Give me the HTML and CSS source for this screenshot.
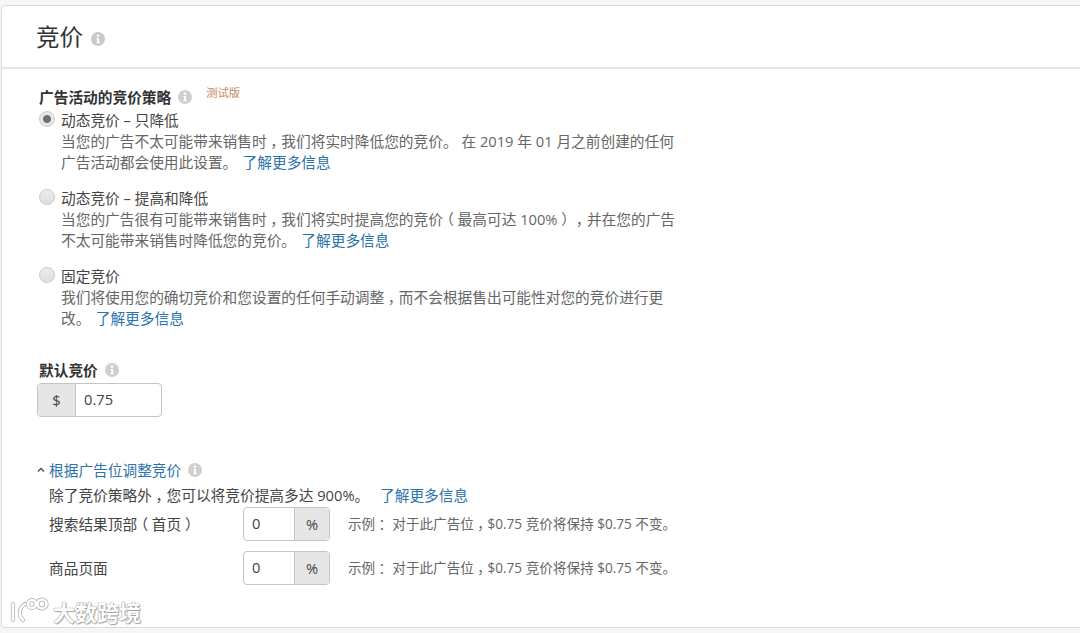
FILE: index.html
```html
<!DOCTYPE html>
<html lang="zh-CN">
<head>
<meta charset="utf-8">
<title>竞价</title>
<link rel="stylesheet" href="styles.css">
</head>
<body>
<svg class="sprite" width="0" height="0" aria-hidden="true">
  <symbol id="info" viewBox="0 0 14 14">
    <circle cx="7" cy="7" r="7" fill="currentColor"/>
    <circle cx="7" cy="3.700" r="1.300" fill="#fff"/>
    <path d="M5.300 6h2.700v4.200h1v1H5.300v-1h1V7h-1z" fill="#fff"/>
  </symbol>
</svg>
<main class="card">
  <header class="card-head">
    <h1 class="title">竞价</h1>
    <svg class="info info-title"><use href="#info"/></svg>
  </header>
  <div class="card-body">
    <section class="strategy">
      <div class="label-row">
        <span class="label">广告活动的竞价策略</span>
        <svg class="info"><use href="#info"/></svg>
        <span class="beta">测试版</span>
      </div>
      <div class="option">
        <span class="radio checked"></span>
        <div class="option-text">
          <div class="option-name">动态竞价 – 只降低</div>
          <p class="desc">当您的广告不太可能带来销售时<span class="fw">，</span>我们将实时降低您的竞价。 在 2019 年 01 月之前创建的任何<br>广告活动都会使用此设置。 <a class="link" href="#">了解更多信息</a></p>
        </div>
      </div>
      <div class="option">
        <span class="radio"></span>
        <div class="option-text">
          <div class="option-name">动态竞价 – 提高和降低</div>
          <p class="desc">当您的广告很有可能带来销售时<span class="fw">，</span>我们将实时提高您的竞价<span class="fw">（</span>最高可达 100%<span class="fw">）</span><span class="fw">，</span>并在您的广告<br>不太可能带来销售时降低您的竞价。 <a class="link" href="#">了解更多信息</a></p>
        </div>
      </div>
      <div class="option">
        <span class="radio"></span>
        <div class="option-text">
          <div class="option-name">固定竞价</div>
          <p class="desc">我们将使用您的确切竞价和您设置的任何手动调整<span class="fw">，</span>而不会根据售出可能性对您的竞价进行更<br>改。 <a class="link" href="#">了解更多信息</a></p>
        </div>
      </div>
    </section>
    <section class="default-bid">
      <div class="label-row">
        <span class="label">默认竞价</span>
        <svg class="info"><use href="#info"/></svg>
      </div>
      <div class="field field-bid">
        <span class="addon addon-dollar">$</span>
        <span class="value">0.75</span>
      </div>
    </section>
    <section class="placement">
      <div class="placement-head">
        <svg class="chevron" viewBox="0 0 8 6"><path d="M1 4.500L4 1.500l3 3" fill="none" stroke="#555" stroke-width="1.500"/></svg>
        <a class="link" href="#">根据广告位调整竞价</a>
        <svg class="info"><use href="#info"/></svg>
      </div>
      <div class="placement-body">
        <p class="intro">除了竞价策略外<span class="fw">，</span>您可以将竞价提高多达 900%。 <a class="link link-gap" href="#">了解更多信息</a></p>
        <div class="pl-row">
          <span class="pl-name">搜索结果顶部<span class="fw">（</span>首页<span class="fw">）</span></span>
          <div class="field field-pct">
            <span class="value">0</span>
            <span class="addon addon-pct">%</span>
          </div>
          <span class="example">示例<span class="fw">：</span> 对于此广告位<span class="fw">，</span>$0.75 竞价将保持 $0.75 不变。</span>
        </div>
        <div class="pl-row">
          <span class="pl-name">商品页面</span>
          <div class="field field-pct">
            <span class="value">0</span>
            <span class="addon addon-pct">%</span>
          </div>
          <span class="example">示例<span class="fw">：</span> 对于此广告位<span class="fw">，</span>$0.75 竞价将保持 $0.75 不变。</span>
        </div>
      </div>
    </section>
  </div>
  <div class="watermark">
    <svg class="wm-logo" viewBox="0 0 40 26">
      <g fill="none" stroke="#b4b4b4" stroke-width="4.200" stroke-linecap="round">
        <path d="M3 7v16"/><path d="M15 7c-6 4-7 11-2 16"/>
        <circle cx="22" cy="7" r="4"/><circle cx="32" cy="7" r="4.500"/>
      </g>
      <g fill="none" stroke="#fff" stroke-width="2.600" stroke-linecap="round">
        <path d="M3 7v16"/><path d="M15 7c-6 4-7 11-2 16"/>
        <circle cx="22" cy="7" r="4"/><circle cx="32" cy="7" r="4.500"/>
      </g>
    </svg>
    <span class="wm-text">大数跨境</span>
  </div>
</main>
</body>
</html>
```
FILE: styles.css
```css
* { box-sizing: border-box; }
html, body { margin: 0; height: 633px; overflow: hidden; }
body {
  background: #f6f6f6;
  padding: 5px 0 0 1px;
  font-family: "Open Sans", "Noto Sans CJK SC", sans-serif;
  font-size: 14.700px;
  color: #555;
}
.sprite { position: absolute; }
.fw { font-feature-settings: "halt"; padding: 0 .25em; }
.card {
  position: relative;
  width: 1090px;
  height: 623px;
  background: #fff;
  border: 1px solid #d9d9d9;
  border-radius: 4px;
}
.card-head {
  height: 63px;
  border-bottom: 2px solid #e4e4e4;
  display: flex;
  align-items: center;
  padding: 0 0 0 34px;
  gap: 8px;
}
.title {
  margin: 0;
  font-size: 23.500px;
  font-weight: 400;
  color: #333;
  line-height: 30px;
}
.info { width: 14px; height: 14px; color: #cfcfcf; flex: none; }
.info-title { margin-top: 4px; color: #c9c9c9; }
.card-body { padding: 0 0 0 37px; }
.label-row { display: flex; align-items: center; height: 21px; }
.label { font-weight: 700; color: #333; }
.label-row .info { margin-left: 7px; }
.strategy { padding-top: 17px; }
.beta {
  font-size: 11.300px;
  color: #c78a62;
  margin: -10px 0 0 14px;
}
.option { display: flex; margin: 3px 0 15px; }
.radio {
  width: 16px;
  height: 16px;
  border-radius: 50%;
  flex: none;
  margin: 1px 0 0;
  border: 1px solid #cbcbcb;
  background: linear-gradient(#ececec, #dedede);
}
.radio.checked {
  background: radial-gradient(circle, #707070 0 3.500px, #e8e8e8 4.500px);
}
.option-text { margin-left: 6px; width: 640px; line-height: 21px; }
.option-name { color: #444; height: 21px; }
.desc { margin: 0; color: #666; }
.link { color: #2a73ad; text-decoration: none; }
.desc .link { margin-left: 1.500px; }
.default-bid { padding-top: 15px; }
.field {
  display: flex;
  height: 34px;
  border: 1px solid #c4c4c4;
  border-radius: 4px;
  background: #fff;
  overflow: hidden;
  color: #444;
}
.field-bid { width: 125px; margin: 3px 0 0 -2px; }
.addon {
  background: #e6e6e6;
  display: flex;
  align-items: center;
  justify-content: center;
  flex: none;
  padding-bottom: 1px;
}
.addon-dollar { width: 38px; border-right: 1px solid #c4c4c4; }
.addon-pct { width: 35px; border-left: 1px solid #c4c4c4; }
.value { flex: 1; display: flex; align-items: center; padding: 0 0 3px 8px; }
.placement { padding-top: 42px; }
.placement-head { display: flex; align-items: center; height: 21px; margin-left: -1px; }
.placement-head .info { margin-left: 7px; }
.chevron { width: 8px; height: 6px; margin: 0 4px 0 -1px; }
.placement-body { padding-left: 10px; }
.intro { margin: 5px 0 0; height: 21px; line-height: 21px; color: #444; }
.link-gap { margin-left: 7px; }
.pl-row { display: flex; align-items: center; height: 34px; margin-top: 10px; }
.pl-row:first-of-type { margin-top: 1px; }
.pl-name { width: 194px; color: #444; padding-bottom: 2px; }
.field-pct { width: 87px; }
.example { margin-left: 18px; font-size: 13.600px; color: #666; padding-bottom: 2px; }
.watermark {
  position: absolute;
  left: 8px;
  top: 591px;
  display: flex;
  align-items: flex-start;
  gap: 3px;
}
.wm-logo { width: 40px; height: 26px; }
.wm-text {
  font-size: 22px;
  line-height: 30px;
  font-weight: 700;
  color: #fff;
  text-shadow: 0 0 1px #888, 0 0 1px #888, 1px 1px 1px #aaa;
}
```
